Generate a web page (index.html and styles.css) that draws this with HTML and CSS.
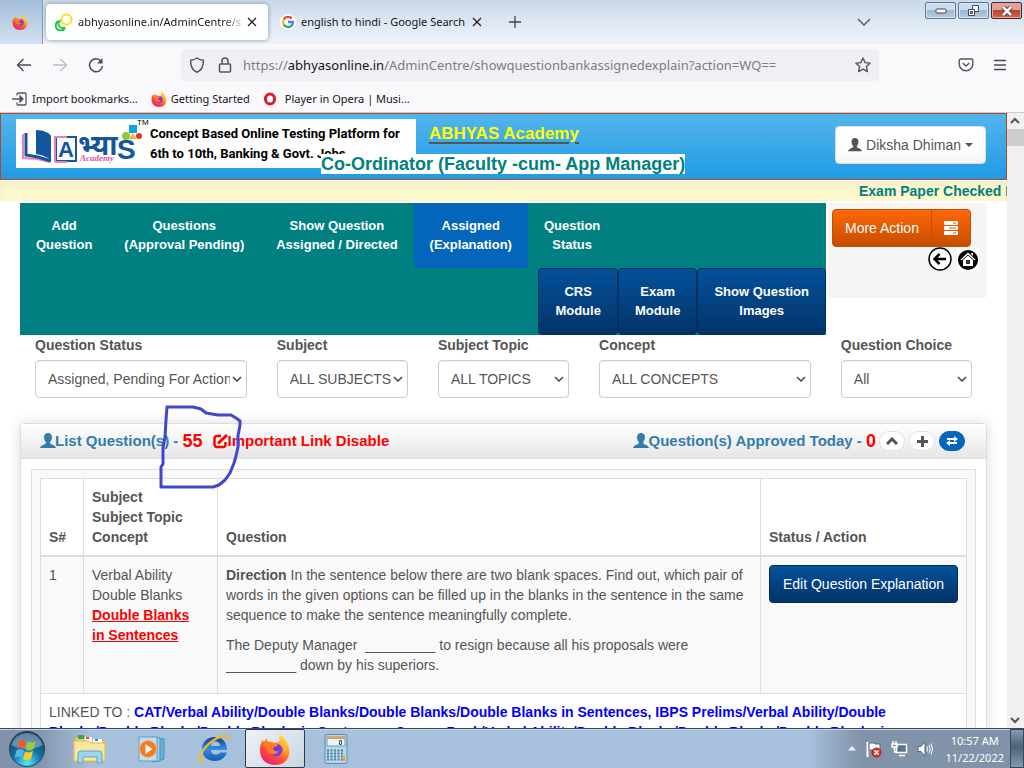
FILE: index.html
```html
<!DOCTYPE html>
<html lang="en">
<head>
<meta charset="utf-8">
<title>Question Bank - Assigned (Explanation)</title>
<meta name="viewport" content="width=device-width, initial-scale=1">
<link rel="stylesheet" href="styles.css">
</head>
<body>
<svg class="defs" width="0" height="0" aria-hidden="true">
  <defs>
    <linearGradient id="ffBody" x1="0.8" y1="0" x2="0.2" y2="1"><stop offset="0" stop-color="#fff14a"/><stop offset="0.35" stop-color="#ffa51f"/><stop offset="0.65" stop-color="#ff4b3c"/><stop offset="1" stop-color="#e51c7a"/></linearGradient>
    <radialGradient id="ffGlobe"><stop offset="0" stop-color="#4f46d8"/><stop offset="1" stop-color="#8f36e0"/></radialGradient>
    <radialGradient id="orb" cx="0.5" cy="0.9" r="0.9"><stop offset="0" stop-color="#4ff0ff"/><stop offset="0.45" stop-color="#1672a8"/><stop offset="1" stop-color="#12395c"/></radialGradient>
    <linearGradient id="ie" x1="0" y1="0" x2="0" y2="1"><stop offset="0" stop-color="#123f86"/><stop offset="0.5" stop-color="#2f8fe0"/><stop offset="1" stop-color="#175bb0"/></linearGradient>
    <symbol id="firefox" viewBox="0 0 32 32">
      <path fill="url(#ffBody)" d="M21 0c1 3 4 5 6 8 6 8 5 24-11 24C7 32 1 26 1 17c0-4 1-8 3-10l1 2c1-2 2-3 3-3l1 3c3-1 5 0 7 1l5-2c-1-3-1-6 0-8z"/>
      <circle cx="17" cy="17" r="6.500" fill="url(#ffGlobe)"/>
      <path fill="#ff7a22" d="M4 11c3-3 8-2 10 0l5 0c0 2-3 3-5 4 0 2 2 4 6 3-2 4-9 5-12-1z"/>
      <path fill="#ffc233" d="M20 8c5 1 7 7 5 13 4-6 3-13-2-16z"/>
    </symbol>
    <symbol id="user" viewBox="0 0 16 16"><path fill="currentColor" d="M8 0c2.500 0 4 1.700 4 4.200 0 2-1 3.800-1.800 4.800-.4.800 0 1.500.8 2 2 1 4.500 1.500 5 4H0c.500-2.500 3-3 5-4 .8-.500 1.200-1.200.8-2C5 8 4 6.200 4 4.200 4 1.700 5.500 0 8 0z"/></symbol>
  </defs>
</svg>

<header class="chrome">
  <div class="tabstrip">
    <div class="pinned"><svg width="16" height="16"><use href="#firefox"/></svg></div>
    <div class="tab tab-active">
      <svg class="tab-icon" width="18" height="18" viewBox="0 0 18 18" fill="none" stroke-width="2"><path d="M7 7a4 4 0 1 0 3 7" stroke="#2bd14a"/><circle cx="11.500" cy="6.500" r="5" stroke="#ffdc1e"/><path d="M3.500 8A5 5 0 1 0 10 15" stroke="#18c93c"/></svg>
      <span class="tab-title fade">abhyasonline.in/AdminCentre/s</span>
      <button class="bare" aria-label="Close tab"><svg width="10" height="10" viewBox="0 0 10 10" stroke="#222" stroke-width="1.300"><path d="M1 1l8 8M9 1l-8 8"/></svg></button>
    </div>
    <div class="tab">
      <svg class="tab-icon" width="16" height="16" viewBox="0 0 16 16" fill="none" stroke-width="2.300"><circle cx="8" cy="8" r="8" fill="#fff" stroke="none"/><path d="M11.800 4.600A5 5 0 0 0 3.700 5.500" stroke="#ea4335"/><path d="M3.700 5.500a5 5 0 0 0 0 5" stroke="#fbbc05"/><path d="M3.700 10.500a5 5 0 0 0 7.600 1.300" stroke="#34a853"/><path d="M11.300 11.800A5 5 0 0 0 13 8H8" stroke="#4285f4"/></svg>
      <span class="tab-title">english to hindi - Google Search</span>
      <button class="bare" aria-label="Close tab"><svg width="10" height="10" viewBox="0 0 10 10" stroke="#222" stroke-width="1.300"><path d="M1 1l8 8M9 1l-8 8"/></svg></button>
    </div>
    <button class="bare new-tab" aria-label="New tab"><svg width="12" height="12" viewBox="0 0 12 12" stroke="#444" stroke-width="1.300"><path d="M6 0v12M0 6h12"/></svg></button>
    <button class="bare list-tabs" aria-label="List all tabs"><svg width="14" height="8" viewBox="0 0 14 8" fill="none" stroke="#555" stroke-width="1.300"><path d="M1 1l6 6 6-6"/></svg></button>
    <div class="window-buttons">
      <button aria-label="Minimize"><svg width="12" height="6" viewBox="0 0 12 6"><rect x="1" y="1" width="10" height="4" rx="1" fill="#fff" stroke="#445"/></svg></button>
      <button aria-label="Restore"><svg width="13" height="12" viewBox="0 0 13 12" fill="#f4f8fb" stroke="#445"><path d="M5.500.500h6v6h-6z"/><path d="M1.500 4.500h6v6h-6z"/><path d="M3.500 6.500h2v2h-2z" fill="#7f9fbf"/></svg></button>
      <button class="win-close" aria-label="Close"><svg width="12" height="10" viewBox="0 0 12 10"><path d="M2 1l8 8M10 1L2 9" stroke="#534" stroke-width="4.500"/><path d="M2 1l8 8M10 1L2 9" stroke="#fff" stroke-width="2.500"/></svg></button>
    </div>
  </div>

  <div class="navbar">
    <button class="bare" aria-label="Back"><svg width="16" height="14" viewBox="0 0 16 14" fill="none" stroke="#4a4a55" stroke-width="1.400"><path d="M15 7H1.500M7.500 1l-6 6 6 6"/></svg></button>
    <button class="bare" aria-label="Forward"><svg width="16" height="14" viewBox="0 0 16 14" fill="none" stroke="#bbbbc2" stroke-width="1.400"><path d="M1 7h13.500M8.500 1l6 6-6 6"/></svg></button>
    <button class="bare" aria-label="Reload"><svg width="16" height="16" viewBox="0 0 16 16" fill="none" stroke="#4a4a55" stroke-width="1.500"><path d="M13 4a6.500 6.500 0 1 0 1.500 5"/><path d="M14.500 1v5.500H9z" fill="#4a4a55" stroke="none"/></svg></button>
    <div class="urlbar">
      <svg width="16" height="16" viewBox="0 0 16 16" fill="none" stroke="#55555f" stroke-width="1.500"><path d="M8 1c2 1.500 4 2 6.300 2.200C14.600 9 12 13.500 8 15.200 4 13.500 1.400 9 1.700 3.200 4 3 6 2.500 8 1z"/></svg>
      <svg width="14" height="16" viewBox="0 0 14 16" fill="none" stroke="#55555f" stroke-width="1.500"><rect x="1.500" y="7" width="11" height="8" rx="1"/><path d="M4 7V4a3 3 0 0 1 6 0v3"/></svg>
      <span class="url">https://<b>abhyasonline.in</b>/AdminCentre/showquestionbankassignedexplain?action=WQ==</span>
      <button class="bare" aria-label="Bookmark"><svg width="16" height="16" viewBox="0 0 16 16" fill="none" stroke="#55555f" stroke-width="1.400" stroke-linejoin="round"><path d="M8 1l2.100 4.600 5 .6-3.700 3.400 1 5L8 12.100 3.600 14.600l1-5L.900 6.200l5-.6z"/></svg></button>
    </div>
    <button class="bare pocket" aria-label="Save to Pocket"><svg width="16" height="14" viewBox="0 0 16 14" fill="none" stroke="#55555f" stroke-width="1.400"><path d="M2.500 1h11a1.300 1.300 0 0 1 1.300 1.300V6a6.800 6.800 0 0 1-13.600 0V2.300A1.300 1.300 0 0 1 2.500 1z"/><path d="M4.700 5L8 8l3.300-3"/></svg></button>
    <button class="bare" aria-label="Menu"><svg width="12" height="12" viewBox="0 0 12 12" stroke="#4a4a55" stroke-width="1.300"><path d="M0 1.500h12M0 6h12M0 10.500h12"/></svg></button>
  </div>

  <nav class="bookmarks">
    <a href="#"><svg width="16" height="14" viewBox="0 0 16 14" fill="none" stroke="#55555f" stroke-width="1.300"><path d="M5 3.500V2a1 1 0 0 1 1-1h7a1 1 0 0 1 1 1v10a1 1 0 0 1-1 1H6a1 1 0 0 1-1-1v-1.500M0 7h9"/><path d="M8 4l3 3-3 3z" fill="#55555f"/></svg>Import bookmarks...</a>
    <a href="#"><svg width="16" height="16"><use href="#firefox"/></svg>Getting Started</a>
    <a href="#" class="opera"><svg width="14" height="14" viewBox="0 0 14 14"><ellipse cx="7" cy="7" rx="4.600" ry="5" fill="#fff" stroke="#e01b2f" stroke-width="3"/></svg>Player in Opera | Musi...</a>
  </nav>
</header>

<div class="viewport">
  <main class="page">
    <header class="site-header">
      <div class="banner">
        <svg class="logo" width="126" height="48" viewBox="0 0 126 48">
          <path d="M7 15v24l14 1 13 3" fill="none" stroke="#ee7fb0" stroke-width="2"/>
          <path d="M10 14v22l12 2 13 4" fill="none" stroke="#14559d" stroke-width="3"/>
          <path d="M12 14v19l8 2V14z" fill="#fff"/>
          <path d="M20 11c7 0 14 3 15 6v25c-3-4-9-6-15-7z" fill="#14559d"/>
          <rect x="40" y="18" width="20" height="24" fill="#f7fbff" stroke="#14559d" stroke-width="2"/>
          <path d="M39 43V18h12M39 43h12" fill="none" stroke="#ee7fb0" stroke-width="2"/>
          <text x="42" y="38" class="logo-a">A</text>
          <text x="62" y="36" class="logo-hi">भ्या</text>
          <text x="101" y="40" class="logo-s">S</text>
          <text x="64" y="42" class="logo-sub">Academy</text>
          <rect x="113" y="6" width="8" height="8" fill="#13a2e0"/>
          <circle cx="110" cy="17" r="4" fill="#8cc540"/><path d="M117 14l4 6h-8z" fill="#f9b233"/><circle cx="123" cy="17" r="3" fill="#e6332a"/>
        </svg>
        <span class="tm">TM</span>
        <p class="banner-text">Concept Based Online Testing Platform for<br>6th to 10th, Banking &amp; Govt. Jobs</p>
      </div>
      <a href="#" class="academy">ABHYAS Academy</a>
      <strong class="role">Co-Ordinator (Faculty -cum- App Manager)</strong>
      <button class="user-button"><svg width="14" height="14"><use href="#user"/></svg>Diksha Dhiman<span class="caret"></span></button>
    </header>
    <div class="ticker"><span>Exam Paper Checked Pending</span></div>

    <div class="content">
      <div class="top">
        <nav class="menu">
          <div class="menu-row">
            <a href="#">Add<br>Question</a>
            <a href="#">Questions<br>(Approval Pending)</a>
            <a href="#">Show Question<br>Assigned / Directed</a>
            <a href="#" class="current">Assigned<br>(Explanation)</a>
            <a href="#">Question<br>Status</a>
          </div>
          <div class="menu-buttons">
            <button>CRS<br>Module</button>
            <button>Exam<br>Module</button>
            <button>Show Question<br>Images</button>
          </div>
        </nav>
        <aside class="actions">
          <div class="more">
            <button>More Action</button>
            <button aria-label="Open actions"><svg width="14" height="14" viewBox="0 0 14 14" fill="#fff"><rect width="14" height="4" rx="1"/><rect y="5" width="14" height="4" rx="1"/><rect y="10" width="14" height="4" rx="1"/><path d="M9 1.500h3v1H9zM5 6.500h7v1H5zM9 11.500h3v1H9z" fill="#e05a00"/></svg></button>
          </div>
          <div class="shortcuts">
            <a href="#" aria-label="Back"><svg width="24" height="24" viewBox="0 0 24 24" fill="none" stroke="#000"><circle cx="12" cy="12" r="11" fill="#fff" stroke-width="1.500"/><path d="M18 12H7M11.500 7l-5 5 5 5" stroke-width="2.500"/></svg></a>
            <a href="#" aria-label="Home"><svg width="22" height="24" viewBox="0 0 22 24"><rect width="22" height="24" fill="#fff"/><circle cx="11" cy="13" r="10" fill="#000"/><path d="M4 13l7-6.500 7 6.500" fill="none" stroke="#fff" stroke-width="1.500"/><path d="M6 13l5-4.500 5 4.500v6H6z" fill="#fff"/><path d="M9 13h4v4H9z" fill="#333"/><path d="M14 6h2v3l-2-2z" fill="#fff"/></svg></a>
          </div>
        </aside>
      </div>

      <form class="filters">
        <div><label for="status">Question Status</label><select id="status"><option>Assigned, Pending For Action</option></select></div>
        <div><label for="subject">Subject</label><select id="subject"><option>ALL SUBJECTS</option></select></div>
        <div><label for="topic">Subject Topic</label><select id="topic"><option>ALL TOPICS</option></select></div>
        <div><label for="concept">Concept</label><select id="concept"><option>ALL CONCEPTS</option></select></div>
        <div><label for="choice">Question Choice</label><select id="choice"><option>All</option></select></div>
      </form>

      <section class="panel">
        <div class="panel-head">
          <h2 class="title"><svg width="16" height="16"><use href="#user"/></svg>List Question(s) - <span class="count">55</span></h2>
          <a href="#" class="important"><svg width="15" height="15" viewBox="0 0 15 15" fill="none" stroke="red" stroke-width="2.500"><path d="M8 2H4a2.500 2.500 0 0 0-2.500 2.500v6A2.500 2.500 0 0 0 4 13h6a2.500 2.500 0 0 0 2.500-2.500V8"/><path d="M5 9.500L14 1" stroke-width="3"/></svg>Important Link Disable</a>
          <h2 class="title approved"><svg width="16" height="16"><use href="#user"/></svg>Question(s) Approved Today - <span class="count">0</span></h2>
          <div class="tools">
            <button aria-label="Collapse"><svg width="12" height="8" viewBox="0 0 12 8" fill="none" stroke="#555" stroke-width="3"><path d="M1 7l5-5 5 5"/></svg></button>
            <button aria-label="Add"><svg width="11" height="11" viewBox="0 0 11 11" stroke="#555" stroke-width="3"><path d="M5.500 0v11M0 5.500h11"/></svg></button>
            <button class="swap" aria-label="Swap"><svg width="12" height="10" viewBox="0 0 12 10" fill="#fff"><path d="M1 2h7V0l4 3-4 3V4H1zM11 6H4V4L0 7l4 3V8h7z"/></svg></button>
          </div>
          <svg class="scribble" width="86" height="86" viewBox="0 0 86 86" fill="none" stroke="#3f48cc" stroke-width="3" stroke-linejoin="round"><path d="M9 3L35 3 43 5 48 9 60 11 73 11 78 14 82 17V21L80 32V43L78 52 76 59 72 69 67 76 61 81 55 83H3V63L5 60V44L7 33 8 16z"/></svg>
        </div>
        <div class="panel-body">
          <div class="well">
            <table>
              <thead>
                <tr><th class="c-num">S#</th><th class="c-subject">Subject<br>Subject Topic<br>Concept</th><th>Question</th><th class="c-action">Status / Action</th></tr>
              </thead>
              <tbody>
                <tr class="odd">
                  <td>1</td>
                  <td>Verbal Ability<br>Double Blanks<br><a href="#" class="concept">Double Blanks<br>in Sentences</a></td>
                  <td><p><b>Direction</b> In the sentence below there are two blank spaces. Find out, which pair of words in the given options can be filled up in the blanks in the sentence in the same sequence to make the sentence meaningfully complete.</p><p>The Deputy Manager&nbsp; _________ to resign because all his proposals were _________ down by his superiors.</p></td>
                  <td><button class="edit">Edit Question Explanation</button></td>
                </tr>
                <tr>
                  <td colspan="4">LINKED TO : <b class="linked">CAT/Verbal Ability/Double Blanks/Double Blanks/Double Blanks in Sentences, IBPS Prelims/Verbal Ability/Double Blanks/Double Blanks/Double Blanks in Sentences, Canara Bank/Verbal Ability/Double Blanks/Double Blanks/Double Blanks in Sentences</b></td>
                </tr>
              </tbody>
            </table>
          </div>
        </div>
      </section>
    </div>
  </main>
  <div class="scrollbar">
    <svg width="16" height="16" viewBox="0 0 16 16" fill="none" stroke="#555" stroke-width="2"><path d="M4 10l4-4 4 4"/></svg>
    <div class="thumb"></div>
    <svg class="down" width="16" height="16" viewBox="0 0 16 16" fill="none" stroke="#555" stroke-width="2"><path d="M4 6l4 4 4-4"/></svg>
  </div>
</div>

<footer class="taskbar">
  <button class="start" aria-label="Start"><svg width="38" height="38" viewBox="0 0 38 38"><circle cx="19" cy="19" r="17.500" fill="url(#orb)" stroke="#24435f"/><path d="M3.500 15a16 16 0 0 1 31 0c-9 5-21 5-31 0z" fill="#fff" opacity="0.350"/><path d="M11 11c3-2 5-2 7 0l-2 8c-2-2-4-2-7 0z" fill="#f0592b"/><path d="M19.500 11.500c3 2 6 1 8-.500l-2 8c-3 2-5 2-8 .500z" fill="#9ccb3b"/><path d="M8.500 20.500c3-2 5-2 7.500 0l-2 7.500c-2-2-4-2-7.500 0z" fill="#53b6e8"/><path d="M17 21.500c3 1.500 5 1 8-.500l-2 8c-3 1.500-5 1.500-8 0z" fill="#fbc92c"/></svg></button>
  <button class="task" aria-label="Explorer"><svg width="34" height="32" viewBox="0 0 34 32"><path d="M2 4h10l2 3h17v22H2z" fill="#e9cd6b" stroke="#c9a646"/><path d="M5 2h6v4H5z" fill="#32a852"/><path d="M12 4h7v5h-7z" fill="#fff"/><path d="M20 6h9v4h-9z" fill="#fff"/><path d="M13 4h3v2h-3z" fill="#d43"/><path d="M22 6h3v2h-3z" fill="#38c"/><path d="M1 8h14l3 2h14v18H1z" fill="#f7e69c" stroke="#d9bd62"/><path d="M5 30V21q0-3 3-3h18q3 0 3 3v9h-5v-6H10v6z" fill="#9ed4ee" stroke="#5aa5cc"/></svg></button>
  <button class="task" aria-label="Media Player"><svg width="30" height="30" viewBox="0 0 30 30"><path d="M18 4l9 1v20l-9 3z" fill="#6fb0d5" stroke="#4a90bb"/><path d="M15 3l8 1v23l-8 1z" fill="#9dcbe4" stroke="#4a90bb"/><rect x="2" y="3" width="18" height="24" fill="#bfe0f0" stroke="#5d9fc4"/><circle cx="11" cy="15" r="8.500" fill="#f47b20" stroke="#fbb374"/><path d="M8.500 10l7 5-7 5z" fill="#fff"/></svg></button>
  <button class="task" aria-label="Internet Explorer"><svg width="34" height="32" viewBox="0 0 34 32"><path fill-rule="evenodd" fill="url(#ie)" d="M18 4c8 0 12 6 12 13H14c0 3 2 4.500 5 4.500 2 0 3-1 4-2h7c-2 5-6 8.500-12 8.500C10 28 5 23 5 16S10 4 18 4zm-4 9h9c0-3-2-4.500-4.500-4.500S14 10 14 13z"/><path d="M27 4c2-2 5-2 4 2M27 3C18 4 6 14 3 24c-1 4 0 6 4 4" fill="none" stroke="#f2b72e" stroke-width="2.300"/></svg></button>
  <button class="task task-active" aria-label="Firefox"><svg width="32" height="32"><use href="#firefox"/></svg></button>
  <button class="task" aria-label="Calculator"><svg width="24" height="30" viewBox="0 0 24 30"><rect x="1" y=".500" width="22" height="29" rx="2" fill="#b9d5e8" stroke="#5d8cb0"/><rect x="3" y="3" width="18" height="9" fill="#e7f3fb" stroke="#6f9bbb"/><path d="M3 3h18v2H3z" fill="#f29b3c"/><path d="M15.500 6.500h2v4h-2z" fill="none" stroke="#456"/><path d="M3 16.500h17M3 19.500h17M3 22.500h17M3 25.500h17" stroke="#4a7ba5" stroke-width="2" stroke-dasharray="2 1.500"/><path d="M18 22h3v5h-3z" fill="#f29b3c"/></svg></button>
  <div class="tray">
    <svg width="8" height="5" viewBox="0 0 8 5"><path d="M0 4.500L4 0l4 4.500z" fill="#eef3f8"/></svg>
    <svg width="17" height="18" viewBox="0 0 17 18"><path d="M2.500 2v15" stroke="#fff" stroke-width="2"/><path d="M4 3h5l1 1h5v7h-5l-1-1H4z" fill="#fff" stroke="#56677e"/><circle cx="11.500" cy="12.500" r="4.500" fill="#d83a2e" stroke="#a32018"/><path d="M9.500 10.500l4 4m0-4l-4 4" stroke="#fff" stroke-width="1.500"/></svg>
    <svg width="17" height="17" viewBox="0 0 17 17"><rect x="5.500" y="4.500" width="10" height="8" fill="#5d728e" stroke="#fff" stroke-width="1.500"/><path d="M8 15.500h6M2 1v3M5 1v3M1 4h5v3H1zM3.500 7v5H6" fill="none" stroke="#fff" stroke-width="1.500"/></svg>
    <svg width="16" height="16" viewBox="0 0 16 16"><path d="M1 5.500h3L8 1v14l-4-4.500H1z" fill="#fff" stroke="#56677e"/><path d="M10 5.500q1.500 2.500 0 5M12 4q2.500 4 0 8M14 2.500q3 5.500 0 11" fill="none" stroke="#fff"/></svg>
    <p class="clock">10:57 AM<br>11/22/2022</p>
  </div>
  <div class="show-desktop"></div>
</footer>
</body>
</html>
```
FILE: styles.css
```css
* { box-sizing: border-box; }
html, body { height: 100%; }
body { margin: 0; display: flex; flex-direction: column; overflow: hidden; background: #fff; color: #555; font: 14px/20px "Liberation Sans", Arial, sans-serif; }
button, select { font: inherit; color: inherit; margin: 0; }
p, h2 { margin: 0; }
a { color: inherit; text-decoration: none; }
svg { display: block; flex: none; }
.defs { position: absolute; }
.bare { display: grid; place-items: center; padding: 0; border: 0; background: none; }

/* Browser chrome */
.chrome { flex: none; color: #15141a; background: #f9f9fb; border-bottom: 1px solid #ccccd1; font: 12px/16px "Noto Sans", "Open Sans", sans-serif; }
.tabstrip { display: flex; height: 44px; background: linear-gradient(#c9d9e8, #dfe9f3 55%, #edf3fa); }
.pinned { width: 43px; padding-right: 3px; display: grid; place-items: center; border-right: 1px solid #8a9bad; background: linear-gradient(#a3bfdb, #d3e1ef); }
.tab { display: flex; align-items: center; width: 222px; margin: 4px 0 4px 3px; padding: 0 11px 0 9px; border-radius: 4px; white-space: nowrap; }
.tab-active { background: #fff; box-shadow: 0 0 4px #7f8f9f; }
.tab-icon { margin-right: 5px; }
.tab-title { flex: 1; min-width: 0; overflow: hidden; font-size: 11px; }
.fade { mask-image: linear-gradient(to right, #000 85%, transparent); }
.new-tab { margin-left: 16px; }
.list-tabs { margin-left: auto; margin-right: 54px; }
.window-buttons { display: flex; gap: 2px; margin: 2px 2px 0 0; }
.window-buttons button { display: grid; place-items: center; width: 31px; height: 17px; padding: 0; border: 1px solid #60758f; border-radius: 2px; background: linear-gradient(#cbdcec 45%, #9cb7d2 50%, #b6cde3); box-shadow: inset 0 0 0 1px #d9e6f2; }
.window-buttons .win-close { border-color: #52202a; background: linear-gradient(#e2a094 45%, #bd4330 50%, #d0694f); box-shadow: inset 0 0 0 1px #e6a99d; }
.navbar { display: flex; align-items: center; gap: 20px; height: 42px; padding: 0 18px 0 16px; }
.urlbar { flex: 1; display: flex; align-items: center; gap: 13px; height: 32px; max-width: 698px; margin-left: 57px; padding: 0 8px; border-radius: 4px; background: #f0f0f4; font-size: 13px; color: #7c7c85; }
.url { flex: 1; min-width: 0; white-space: nowrap; overflow: hidden; margin-left: -2px; }
.url b { font-weight: 400; color: #15141a; }
.pocket { margin-left: auto; }
.bookmarks { display: flex; gap: 13px; padding: 5px 12px; font-size: 11px; }
.bookmarks a { display: flex; align-items: center; gap: 4px; }
.opera svg { margin-right: 4px; }

/* Web page */
.viewport { flex: 1; min-height: 0; display: flex; overflow: hidden; }
.page { flex: 1; min-width: 0; overflow: hidden; }
.scrollbar { flex: none; width: 17px; display: flex; flex-direction: column; background: #f0f0f0; }
.thumb { height: 17px; background: #cdcdcd; }
.down { margin-top: auto; }
.site-header { position: relative; display: flex; align-items: flex-start; height: 67px; padding: 5px 20px 0 15px; border: 1px solid #b14826; background: linear-gradient(#54b4eb, #1f9be5); }
.banner { position: relative; display: flex; width: 400px; height: 49px; background: #fff; color: #000; }
.tm { position: absolute; left: 121px; top: 0; font: 8px/8px "Liberation Sans", sans-serif; }
.banner-text { margin-left: 8px; padding-top: 5px; font: bold 13px/20px Roboto, "Liberation Sans", Arial, sans-serif; white-space: nowrap; }
.logo-a { font: bold 22px "Liberation Sans"; fill: #14559d; }
.logo-s { font: bold 28px "Liberation Sans"; fill: #14559d; }
.logo-hi { font: bold 28px "Noto Sans Devanagari", "Noto Sans", "Lohit Devanagari", sans-serif; fill: #14559d; }
.logo-sub { font: italic bold 9px "Liberation Serif"; fill: #e0559a; }
.academy { margin: 5px 0 0 13px; font: bold 17px/20px "Liberation Sans", sans-serif; color: #ff0; text-decoration: underline 2px #555; text-underline-offset: 3px; }
.role { position: absolute; left: 320px; top: 40px; background: #fff; color: teal; font-size: 18px; line-height: 20px; white-space: nowrap; }
.user-button { display: flex; align-items: center; gap: 4px; margin: 7px 0 0 auto; height: 38px; padding: 0 12px; border: 1px solid #ddd; border-radius: 4px; background: linear-gradient(#fff 60%, #f4f4f4); }
.caret { border: 4px solid transparent; border-top-color: #555; border-bottom: 0; }
.ticker { height: 20px; margin-top: 1px; overflow: hidden; background: #fdf7cc; box-shadow: inset 0 3px 6px #f1ecc8; color: teal; font-weight: bold; white-space: nowrap; }
.ticker span { display: block; margin-left: 859px; }
.content { padding: 2px 20px 0; }
.top { display: flex; align-items: flex-start; gap: 2px; }
.menu { flex: 5; background: teal; color: #fff; font-weight: bold; font-size: 13px; line-height: 19px; text-align: center; }
.menu-row { display: flex; }
.menu-row a { padding: 13px 16px 14px; }
.menu-row .current { background: #0466bb; }
.menu-buttons { display: flex; justify-content: flex-end; }
.menu-buttons button { padding: 13px 16px 14px; border: 1px solid #022e60; border-radius: 4px; background: linear-gradient(#04519b, #033368); font-weight: bold; line-height: 19px; color: #fff; height: 67px; }
.actions { width: 159px; height: 95px; padding: 6px 4px; background: #f5f5f5; border-radius: 4px; }
.more { display: flex; }
.more button { height: 38px; padding: 0 12px; border: 1px solid #c74f03; border-radius: 4px 0 0 4px; background: linear-gradient(#ff6707, #c64d00); color: #fff; }
.more button + button { padding: 0 12px; margin-left: -1px; border-radius: 0 4px 4px 0; }
.shortcuts { display: flex; justify-content: flex-end; gap: 5px; padding-right: 4px; }
.filters { display: grid; grid-template-columns: 3fr 2fr 2fr 3fr 2fr; }
.filters div { padding: 0 15px; min-width: 0; }
.filters label { display: block; margin-bottom: 5px; font-weight: bold; }
select { display: block; width: 100%; height: 38px; padding: 8px 16px 8px 12px; border: 1px solid #ccc; border-radius: 4px; box-shadow: inset 0 1px 1px #eee; appearance: none; background: #fff url("data:image/svg+xml,%3Csvg xmlns='http://www.w3.org/2000/svg' width='10' height='6' fill='none' stroke='%23444' stroke-width='1.500'%3E%3Cpath d='M1 1l4 4 4-4'/%3E%3C/svg%3E") no-repeat right 4px center; }
.panel { margin-top: 25px; border: 1px solid #ddd; border-radius: 4px; box-shadow: 0 0 14px #ddd; }
.panel-head { position: relative; display: flex; align-items: center; height: 35px; padding: 0 21px 0 19px; border-bottom: 1px solid #ddd; background: linear-gradient(#fff, #e6e6e6); font-weight: bold; }
.title { display: flex; align-items: center; font-size: 15px; line-height: 20px; color: #317eac; white-space: pre; }
.count { color: red; font-size: 18px; }
.title svg { margin-right: -1px; }
.important { display: flex; align-items: center; margin-left: 10px; color: red; font-size: 15px; }
.approved { margin-left: auto; }
.tools { display: flex; gap: 4px; margin-left: 3px; }
.tools button { display: grid; place-items: center; width: 26px; height: 20px; padding: 0; border: 1px solid #e2e2e2; border-radius: 10px; background: #fff; }
.tools .swap { background: #0466bb; border-color: #0466bb; }
.scribble { position: absolute; left: 137px; top: -20px; }
.panel-body { padding: 10px; }
.well { padding: 8px; border: 1px solid #ddd; background: #f9f9f9; }
table { width: 100%; border-collapse: collapse; table-layout: fixed; background: #fff; }
th, td { padding: 8px; border: 1px solid #ddd; text-align: left; vertical-align: top; }
th { vertical-align: bottom; border-bottom-width: 2px; }
.c-num { width: 43px; }
.c-subject { width: 134px; }
.c-action { width: 206px; }
.odd { background: #f9f9f9; }
td p { margin-bottom: 10px; }
.concept { color: #f00; font-weight: bold; text-decoration: underline; }
.edit { width: 100%; height: 38px; padding: 0; border: 1px solid #022e60; border-radius: 4px; background: linear-gradient(#04519b, #033368); color: #fff; }
.linked { color: #00f; }

/* Desktop taskbar */
.taskbar { flex: none; display: flex; align-items: center; height: 40px; border-top: 1px solid #394a5e; box-shadow: inset 0 1px #c9d8e8; background: linear-gradient(to right, #8092a8, #8395ac 40px, #a7c0dc 90px, #a7c0dc 79%, #8193a9 84%, #8193a9); color: #fff; }
.taskbar button { border: 0; background: none; padding: 0; display: grid; place-items: center; }
.start { width: 54px; }
.taskbar .task { width: 62px; height: 39px; }
.taskbar .start { margin-right: 5px; }
.taskbar .task-active { width: 60px; border: 1px solid #2c3a4b; border-radius: 2px; background: linear-gradient(135deg, #eef2f7, #cbd6e2); }
.tray { display: flex; align-items: center; gap: 9px; margin-left: auto; }
.clock { margin-left: 3px; font: 11px/17px "Noto Sans", "Open Sans", sans-serif; text-align: center; }
.show-desktop { width: 14px; height: 39px; margin-left: 6px; border: 1px solid #36485e; background: linear-gradient(#8b9cb1, #4d6078 45%, #8799af); }
```
